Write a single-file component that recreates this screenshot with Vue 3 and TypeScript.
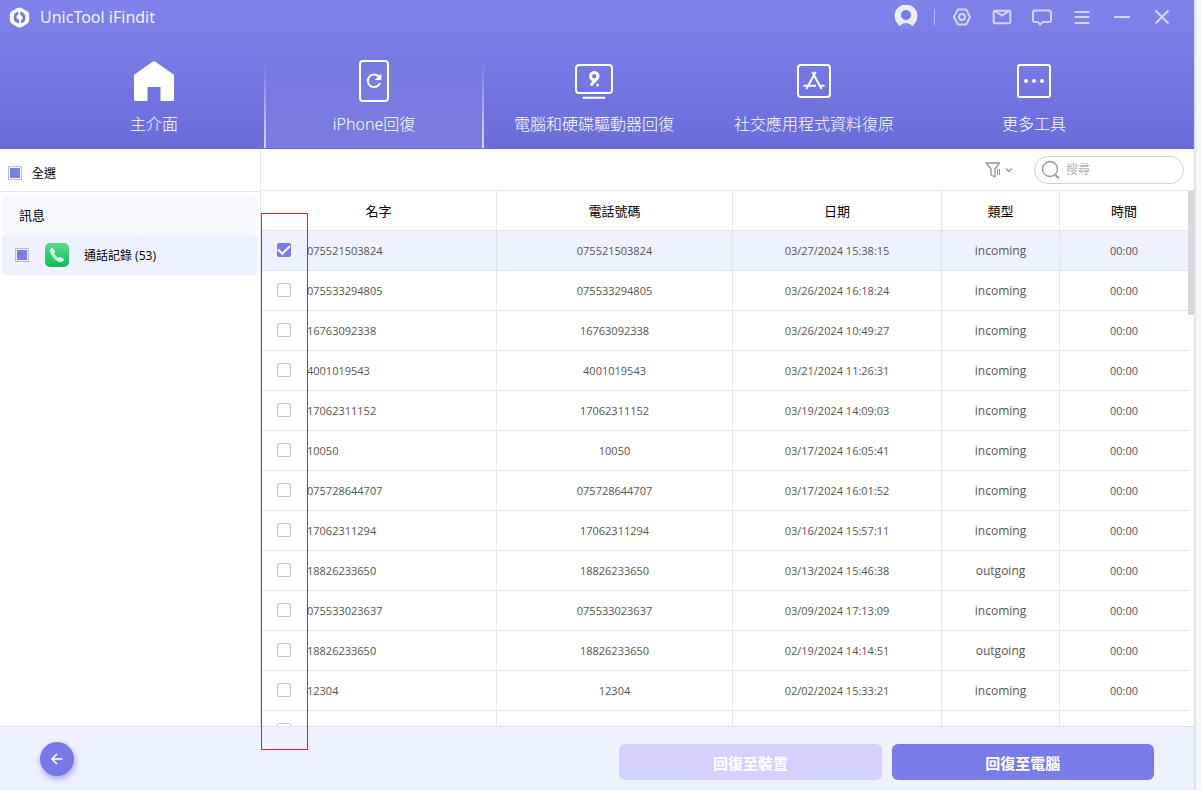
<script setup lang="ts">
import { ref } from 'vue'

interface CallRecord {
  id: number
  number: string
  date: string
  type: 'incoming' | 'outgoing' | ''
  duration: string
  checked: boolean
}

const entries: [string, string, 'incoming' | 'outgoing' | '', string][] = [
  ['075521503824', '03/27/2024 15:38:15', 'incoming', '00:00'],
  ['075533294805', '03/26/2024 16:18:24', 'incoming', '00:00'],
  ['16763092338', '03/26/2024 10:49:27', 'incoming', '00:00'],
  ['4001019543', '03/21/2024 11:26:31', 'incoming', '00:00'],
  ['17062311152', '03/19/2024 14:09:03', 'incoming', '00:00'],
  ['10050', '03/17/2024 16:05:41', 'incoming', '00:00'],
  ['075728644707', '03/17/2024 16:01:52', 'incoming', '00:00'],
  ['17062311294', '03/16/2024 15:57:11', 'incoming', '00:00'],
  ['18826233650', '03/13/2024 15:46:38', 'outgoing', '00:00'],
  ['075533023637', '03/09/2024 17:13:09', 'incoming', '00:00'],
  ['18826233650', '02/19/2024 14:14:51', 'outgoing', '00:00'],
  ['12304', '02/02/2024 15:33:21', 'incoming', '00:00'],
  ['', '', '', ''],
]

const records = ref<CallRecord[]>(
  entries.map(([number, date, type, duration], id) => ({
    id,
    number,
    date,
    type,
    duration,
    checked: id === 0,
  })),
)

const tabs = [
  { key: 'home', label: '主介面' },
  { key: 'iphone', label: 'iPhone回復' },
  { key: 'drive', label: '電腦和硬碟驅動器回復' },
  { key: 'social', label: '社交應用程式資料復原' },
  { key: 'more', label: '更多工具' },
]
const activeTab = ref('iphone')
const query = ref('')
</script>

<template>
  <div class="window">
    <header class="header">
      <div class="titlebar">
        <svg class="logo" viewBox="0 0 20 20" aria-hidden="true">
          <path d="M7.6 1.2Q10-.4 12.4 1.2L17 3.8Q19.2 5 19.2 7.4V12.6Q19.2 15 17 16.2L12.4 18.8Q10 20.4 7.6 18.8L3 16.2Q.8 15 .8 12.6V7.400Q.8 5 3 3.8Z" fill="#fff" />
          <path d="M8.800 4.400V7L7.200 8.600V10.500L9.600 12.500V15.800Q4.400 14.600 4.400 10T8.800 4.400Z M10.800 4.200Q15.600 5.400 15.600 10T11.400 15.600V13L12.900 11.400V9.500L10.800 7.500Z" fill="#7478df" />
        </svg>
        <span class="title">UnicTool iFindit</span>
        <button class="avatar" type="button" aria-label="Account">
          <svg viewBox="0 0 24 24" width="24" height="24">
            <circle cx="12" cy="13" r="11" fill="#8488ef" />
            <path d="M3.500 18.800A11.500 11.500 0 1 1 20.500 18.800Q17.500 16.200 14.500 15.600H9.500Q6.500 16.200 3.500 18.800Z" fill="#eceefd" />
            <path d="M3.500 18.800Q6 16 9.500 15.600H14.500Q18 16 20.500 18.800L18.500 21Q15.500 18 12 18T5.500 21Z" fill="#eceefd" />
            <circle cx="12" cy="10" r="5" fill="#777be4" />
          </svg>
        </button>
        <span class="divider"></span>
        <button class="tool" type="button" aria-label="Settings">
          <svg viewBox="0 0 22 22" width="22" height="22">
            <path d="M6.800 3.500H15.200L19 11L15.200 18.500H6.800L3 11Z" stroke-linejoin="round" />
            <circle cx="11" cy="11" r="3" />
          </svg>
        </button>
        <button class="tool" type="button" aria-label="Mail">
          <svg viewBox="0 0 22 22" width="22" height="22">
            <rect x="2.700" y="4.700" width="16.600" height="12.600" rx="1" /><path d="M4 5L11 9.500L18 5" />
          </svg>
        </button>
        <button class="tool" type="button" aria-label="Feedback">
          <svg viewBox="0 0 22 22" width="22" height="22">
            <path d="M4 4.500H18Q20 4.500 20 6.500V14Q20 16 18 16H12L9 18.500L7 16H4Q2 16 2 14V6.500Q2 4.500 4 4.500Z" stroke-linejoin="round" />
          </svg>
        </button>
        <button class="tool" type="button" aria-label="Menu">
          <svg viewBox="0 0 22 22" width="22" height="22">
            <path d="M3.500 6H18.500M3.500 11H18.500M3.500 17H18.500" />
          </svg>
        </button>
        <button class="tool" type="button" aria-label="Minimize">
          <svg viewBox="0 0 22 22" width="22" height="22"><path d="M3 11H19" /></svg>
        </button>
        <button class="tool" type="button" aria-label="Close">
          <svg viewBox="0 0 22 22" width="22" height="22"><path d="M4.500 4.500L17.500 17.500M17.500 4.500L4.500 17.500" /></svg>
        </button>
      </div>

      <nav class="tabs">
        <button
          v-for="tab in tabs"
          :key="tab.key"
          type="button"
          class="tab"
          :class="{ active: tab.key === activeTab }"
          @click="activeTab = tab.key"
        >
          <svg v-if="tab.key === 'home'" class="tab-icon" viewBox="0 0 44 44">
            <path d="M20.500 2.800Q22 1.500 23.500 2.800L41.500 15.500Q42 16 42 17V40.500Q42 42 40.500 42H28.500V28H15.500V42H3.500Q2 42 2 40.500V17Q2 16 2.500 15.500Z" fill="#fff" />
          </svg>
          <svg v-else-if="tab.key === 'iphone'" class="tab-icon outline" viewBox="0 0 44 44">
            <rect x="8" y="2" width="28" height="40" rx="3" />
            <path d="M27.200 18.200A6.300 6.300 0 1 0 28 24" />
            <path d="M29.300 14.500V21H22.800Z" fill="#fff" stroke="none" />
          </svg>
          <svg v-else-if="tab.key === 'drive'" class="tab-icon outline" viewBox="0 0 44 44">
            <rect x="4" y="6" width="36" height="28" rx="3" />
            <path d="M11.500 38.700H32.500" stroke-linecap="round" />
            <circle cx="22.300" cy="17.200" r="3.700" stroke-width="3" />
            <path d="M24.500 20L19.500 25.500" stroke-width="3" stroke-linecap="round" />
            <circle cx="25.600" cy="26" r="1.500" fill="#fff" stroke="none" />
          </svg>
          <svg v-else-if="tab.key === 'social'" class="tab-icon outline" viewBox="0 0 44 44">
            <rect x="6" y="6" width="32" height="32" rx="3" />
            <path d="M20.300 13L29.500 30M23.700 13L14.300 30M11.500 26.800H24M27.500 26.800H32.500" stroke-width="2" />
          </svg>
          <svg v-else class="tab-icon outline" viewBox="0 0 44 44">
            <rect x="6" y="6" width="32" height="32" rx="2" />
            <g fill="#fff" stroke="none"><circle cx="14" cy="22" r="2" /><circle cx="22" cy="22" r="2" /><circle cx="30" cy="22" r="2" /></g>
          </svg>
          <span class="tab-label">{{ tab.label }}</span>
        </button>
      </nav>
    </header>

    <div class="body">
      <aside class="sidebar">
        <label class="select-all">
          <input class="partial" type="checkbox" :indeterminate="true" />
          <span>全選</span>
        </label>
        <div class="groups">
          <div class="group-title">訊息</div>
          <label class="group-item">
            <input class="partial" type="checkbox" :indeterminate="true" />
            <svg class="phone" viewBox="0 0 24 24" aria-hidden="true">
              <defs>
                <linearGradient id="phone-green" x1="0" y1="0" x2="0" y2="1">
                  <stop offset="0" stop-color="#5fd98a" /><stop offset="1" stop-color="#0dbd55" />
                </linearGradient>
              </defs>
              <rect width="24" height="24" rx="5" fill="url(#phone-green)" />
              <path d="M5.200 6.200Q6.500 4.200 7.900 5.200L10 8.300Q10.300 9.300 9 10.300Q9.800 12.600 13.400 15Q14.500 13.600 15.700 14L18.700 16.100Q19.600 17.200 17.600 18.800Q14.500 20.300 9.200 15.400Q4 10 5.200 6.200Z" fill="#dcf5e6" />
            </svg>
            <span>通話記錄 (53)</span>
          </label>
        </div>
      </aside>

      <main class="content">
        <div class="toolbar">
          <button class="filter" type="button" aria-label="Filter">
            <svg viewBox="0 0 28 18" width="28" height="18">
              <path d="M1 2H14.500L10 8V16L6 14V8Z" stroke-linejoin="round" />
              <path d="M12.500 8V14M14.500 8V14" stroke-width="1" /><path d="M21 7.500L24 10.500L27 7.500" />
            </svg>
          </button>
          <label class="search">
            <svg viewBox="0 0 20 20" width="20" height="20" aria-hidden="true">
              <circle cx="9" cy="9" r="7.500" /><path d="M14.500 15L18 18.500" stroke-width="2" />
            </svg>
            <input v-model="query" type="text" placeholder="搜尋" aria-label="搜尋" />
          </label>
        </div>

        <div class="list">
          <table class="records">
            <colgroup>
              <col class="col-check" /><col class="col-name" /><col class="col-phone" />
              <col class="col-date" /><col class="col-type" /><col class="col-time" />
            </colgroup>
            <thead>
              <tr>
                <th colspan="2">名字</th>
                <th>電話號碼</th>
                <th>日期</th>
                <th>類型</th>
                <th>時間</th>
              </tr>
            </thead>
            <tbody>
              <tr v-for="record in records" :key="record.id" :class="{ selected: record.checked }">
                <td class="check">
                  <input v-model="record.checked" class="box" type="checkbox" :aria-label="`選取 ${record.number}`" />
                </td>
                <td class="name">{{ record.number }}</td>
                <td>{{ record.number }}</td>
                <td>{{ record.date }}</td>
                <td class="type">{{ record.type }}</td>
                <td>{{ record.duration }}</td>
              </tr>
            </tbody>
          </table>
          <div class="scrollbar"><div class="thumb"></div></div>
        </div>
        <div class="marker"></div>
      </main>
    </div>

    <footer class="footer">
      <button class="back" type="button" aria-label="Back">
        <svg viewBox="0 0 16 16" width="16" height="16"><path d="M13.500 8H3M8 3L3 8L8 13" /></svg>
      </button>
      <div class="actions">
        <button class="action" type="button" disabled>回復至裝置</button>
        <button class="action" type="button">回復至電腦</button>
      </div>
    </footer>
  </div>
</template>

<style>
body {
  background: #f6f7fd;
}
</style>

<style scoped>
* {
  box-sizing: border-box;
}

.window {
  display: flex;
  flex-direction: column;
  height: 100vh;
  margin-right: 7px;
  background: #fff;
  box-shadow: 0 0 3px rgba(60, 60, 90, 0.4);
  color: #000;
  font-family: "Open Sans", "Noto Sans CJK TC", sans-serif;
  font-size: 12px;
}

button {
  padding: 0;
  border: 0;
  background: none;
  color: inherit;
  font: inherit;
  cursor: pointer;
}

input {
  margin: 0;
}

svg {
  display: block;
  flex: none;
}

.header {
  flex: none;
  background: linear-gradient(#8083eb, #6a6cda);
  border-bottom: 1px solid #6365d3;
  color: #fff;
}

.titlebar {
  display: flex;
  align-items: center;
  height: 34px;
  padding: 0 12px 0 9px;
}

.logo {
  width: 21px;
  height: 21px;
}

.title {
  flex: 1;
  margin-left: 10px;
  color: #f0f1ff;
  font-family: "Noto Sans", sans-serif;
  font-size: 16px;
  line-height: 22px;
}

.avatar {
  margin-right: 16px;
}

.divider {
  width: 1px;
  height: 16px;
  margin-right: 7px;
  background: #b4b6f4;
}

.tool {
  display: flex;
  justify-content: center;
  width: 40px;
}

.tool svg {
  fill: none;
  stroke: #d3d5fa;
  stroke-width: 2;
}

.tabs {
  display: flex;
  height: 114px;
  padding: 0 50px 0 44px;
}

.tab {
  position: relative;
  display: flex;
  flex: 1;
  flex-direction: column;
  align-items: center;
  gap: 9px;
  padding-top: 25px;
}

.tab.active {
  background: linear-gradient(rgba(123, 126, 230, 0), #797be3 50%, #797bdd);
}

.tab.active::before,
.tab.active::after {
  content: "";
  position: absolute;
  top: 30px;
  bottom: 0;
  width: 2px;
  background: linear-gradient(rgba(220, 215, 250, 0), #dcd6f6);
}

.tab.active::before {
  left: 0;
}

.tab.active::after {
  right: 0;
}

.tab-icon {
  width: 44px;
  height: 44px;
}

.outline {
  fill: none;
  stroke: #fff;
  stroke-width: 2;
}

.tab-label {
  font-family: "Noto Sans", "Noto Sans CJK TC", sans-serif;
  font-size: 16px;
  font-weight: 300;
  line-height: 24px;
  white-space: nowrap;
}

.body {
  display: flex;
  flex: 1;
  min-height: 0;
}

.sidebar {
  flex: none;
  width: 261px;
  border-right: 1px solid #e3e3e8;
}

.select-all {
  display: flex;
  align-items: center;
  gap: 10px;
  height: 43px;
  padding: 6px 8px 0;
  border-bottom: 1px solid #e3e3e8;
}

.partial {
  appearance: none;
  width: 14px;
  height: 14px;
  padding: 1px;
  border: 1px solid #bdbdc4;
  background: #7b7ee9 content-box;
}

.groups {
  padding: 4px 2px;
}

.group-title {
  padding: 0 17px;
  border-radius: 6px;
  background: #f7f8fd;
  font-size: 13px;
  line-height: 39px;
}

.group-item {
  display: flex;
  align-items: center;
  height: 40px;
  padding: 0 13px;
  border-radius: 4px;
  background: #eff1ff;
}

.phone {
  width: 24px;
  height: 24px;
  margin: 0 15px 0 16px;
}

.content {
  position: relative;
  display: flex;
  flex: 1;
  flex-direction: column;
  min-width: 0;
}

.toolbar {
  display: flex;
  flex: none;
  align-items: center;
  justify-content: flex-end;
  gap: 21px;
  height: 42px;
  padding-right: 10px;
  border-bottom: 1px solid #e3e3e8;
}

.filter svg,
.search svg {
  fill: none;
  stroke: #979797;
  stroke-width: 1.3;
}

.search {
  display: flex;
  align-items: center;
  gap: 5px;
  width: 150px;
  height: 28px;
  padding: 0 6px;
  border: 1px solid #cdcdd3;
  border-radius: 14px;
}

.search input {
  flex: 1;
  min-width: 0;
  padding: 0;
  border: 0;
  outline: 0;
  background: none;
  font: inherit;
}

.search input::placeholder {
  color: #b4b4b8;
}

.list {
  display: flex;
  flex: 1;
  align-items: flex-start;
  min-height: 0;
  overflow: hidden;
}

.records {
  flex: 1;
  width: 100%;
  table-layout: fixed;
  border-collapse: separate;
  border-spacing: 0;
}

.col-check {
  width: 46px;
}

.col-name {
  width: 190px;
}

.col-phone {
  width: 236px;
}

.col-date {
  width: 209px;
}

.col-type {
  width: 118px;
}

.col-time {
  width: 128px;
}

.records th,
.records td {
  height: 40px;
  padding: 0;
  border-right: 1px solid #e3e3e8;
  border-bottom: 1px solid #e3e3e8;
  text-align: center;
}

.records th {
  font-size: 13px;
  font-weight: 400;
}

.records td {
  color: #555;
  font-size: 11px;
}

.records th:last-child,
.records td:last-child,
.records td.check {
  border-right: 0;
}

.records td.check {
  padding-bottom: 2px;
}

.records td.name {
  text-align: left;
}

.records td.type {
  font-size: 12px;
}

.records .selected td {
  background: #eff1ff;
}

.box {
  appearance: none;
  display: block;
  width: 14px;
  height: 14px;
  margin: 0 auto;
  border: 1px solid #c4c4c8;
  border-radius: 2px;
  background: #fff;
}

.box:checked {
  display: grid;
  place-items: center;
  border-color: #777be8;
  background: #777be8;
}

.box:checked::after {
  content: "";
  width: 10px;
  height: 5px;
  margin-bottom: 3px;
  border: solid #fff;
  border-width: 0 0 2px 2px;
  transform: rotate(-45deg);
}

.scrollbar {
  flex: none;
  width: 6px;
}

.thumb {
  height: 124px;
  background: #d9d9d9;
}

.marker {
  position: absolute;
  top: 64px;
  bottom: -24px;
  left: 0;
  width: 47px;
  border: 1px solid #e02020;
  pointer-events: none;
}

.footer {
  display: flex;
  flex: none;
  align-items: flex-start;
  justify-content: space-between;
  height: 64px;
  padding: 15px 40px 0;
  border-top: 1px solid #e0e0ea;
  background: #f0f1ff;
}

.back {
  display: grid;
  place-items: center;
  width: 34px;
  height: 34px;
  border-radius: 50%;
  background: #777ae6;
  box-shadow: 1px 3px 6px rgba(110, 115, 240, 0.6);
}

.back svg {
  fill: none;
  stroke: #fff;
  stroke-width: 1.5;
}

.actions {
  display: flex;
  flex: none;
  gap: 10px;
  width: 48%;
  margin-top: 2px;
}

.action {
  flex: 1;
  height: 36px;
  border-radius: 6px;
  background: #797ce8;
  color: #fff;
  font-size: 15px;
  font-weight: 700;
}

.action:disabled {
  background: #d5d0ff;
}
</style>
